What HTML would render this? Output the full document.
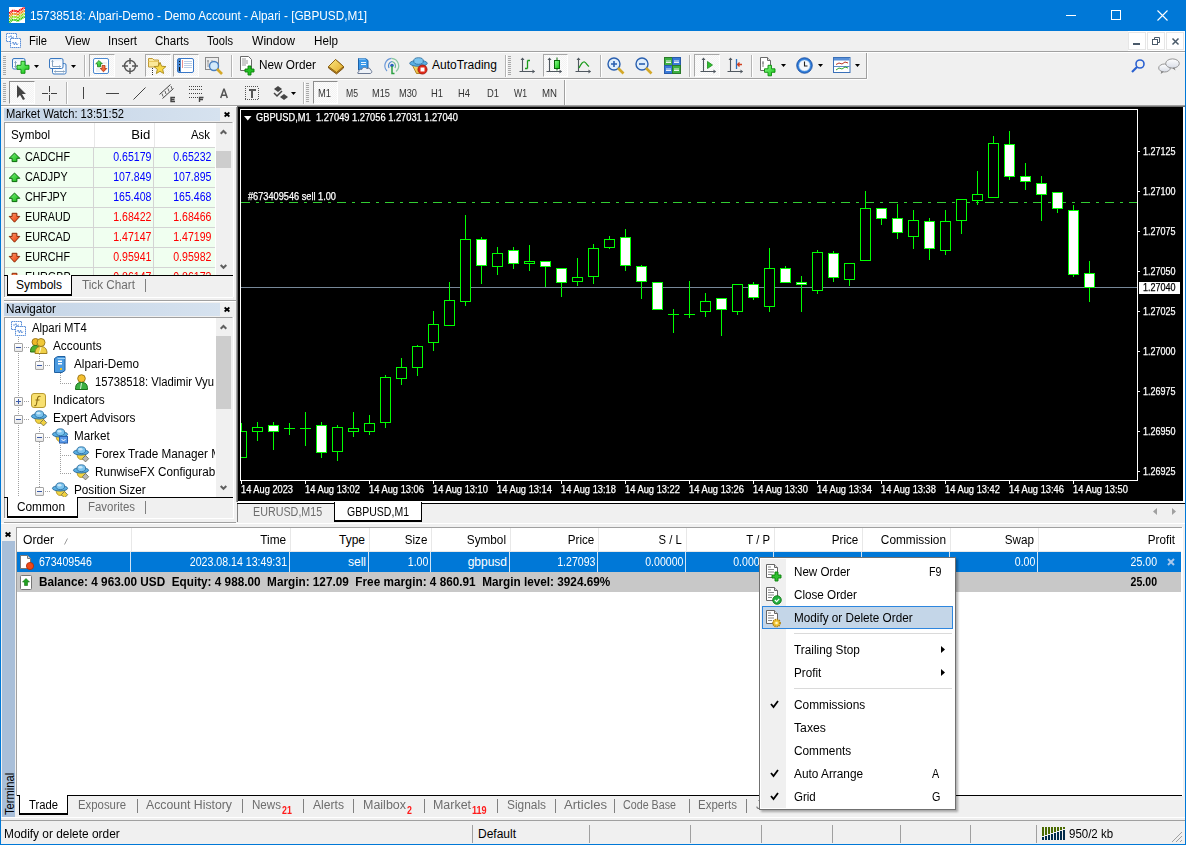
<!DOCTYPE html><html><head><meta charset="utf-8"><style>
*{margin:0;padding:0;box-sizing:border-box}
html,body{width:1186px;height:845px;overflow:hidden;background:#f0f0f0}
body{position:relative;font-family:"Liberation Sans",sans-serif;font-size:12px;color:#000}
div{position:absolute}
.t{white-space:nowrap;line-height:14px}
.c{color:#fff;-webkit-text-stroke:0.25px #fff}
svg{position:absolute;overflow:visible}
</style></head><body><svg width="0" height="0" style="left:0;top:0"><defs><linearGradient id="gwin" x1="0" y1="0" x2="0" y2="1"><stop offset="0" stop-color="#d8e8f8"/><stop offset="0.3" stop-color="#f8fbff"/><stop offset="1" stop-color="#fff"/></linearGradient><linearGradient id="gbook" x1="0" y1="0" x2="1" y2="1"><stop offset="0" stop-color="#fce880"/><stop offset="1" stop-color="#e0a828"/></linearGradient><linearGradient id="gbub" x1="0" y1="0" x2="0" y2="1"><stop offset="0" stop-color="#ffffff"/><stop offset="1" stop-color="#d8dce6"/></linearGradient><linearGradient id="gplus" x1="0" y1="0" x2="1" y2="1"><stop offset="0" stop-color="#90ff90"/><stop offset="1" stop-color="#10c010"/></linearGradient><linearGradient id="gup" x1="0" y1="0" x2="1" y2="1"><stop offset="0" stop-color="#7af07a"/><stop offset="1" stop-color="#14b814"/></linearGradient><linearGradient id="gdn" x1="0" y1="0" x2="1" y2="1"><stop offset="0" stop-color="#ff9a6a"/><stop offset="1" stop-color="#e83a08"/></linearGradient></defs></svg>
<div style="left:0px;top:0px;width:1186px;height:31px;background:#0078d7"></div>
<svg style="left:9px;top:7px;" width="16" height="16" viewBox="0 0 16 16"><rect x="0" y="0" width="16" height="16" fill="#fff"/><polyline points="0.3,6.3 3.5,3.8 7.3,4 8.8,5.2 11,3.2 15.7,0.6" stroke="#f00000" stroke-width="2.1" fill="none" stroke-dasharray="1.2 0.5"/><polyline points="0.3,9.3 3.5,6.8 7.3,7 8.8,8.2 11,6.2 15.7,3.6" stroke="#f07800" stroke-width="2.1" fill="none" stroke-dasharray="1.2 0.5"/><polyline points="0.3,12.3 3.5,9.8 7.3,10 8.8,11.2 11,9.2 15.7,6.6" stroke="#88d800" stroke-width="2.1" fill="none" stroke-dasharray="1.2 0.5"/><polyline points="0.3,15.3 3.5,12.8 7.3,13 8.8,14.2 11,12.2 15.7,9.6" stroke="#30c800" stroke-width="2.1" fill="none" stroke-dasharray="1.2 0.5"/></svg>
<div class="t" style="top:9px;left:30px;transform-origin:0 0;transform:scaleX(0.9813);color:#fff">15738518: Alpari-Demo - Demo Account - Alpari - [GBPUSD,M1]</div>
<div style="left:1066px;top:15px;width:10px;height:1px;background:#fff"></div>
<div style="left:1111px;top:10px;width:10px;height:10px;border:1px solid #fff"></div>
<svg style="left:1157px;top:10px;" width="11" height="11" viewBox="0 0 11 11"><path d="M0.5 0.5L10.5 10.5M10.5 0.5L0.5 10.5" stroke="#fff" stroke-width="1.1"/></svg>
<div style="left:0px;top:31px;width:1px;height:814px;background:#0078d7"></div>
<div style="left:1185px;top:31px;width:1px;height:814px;background:#0078d7"></div>
<div style="left:0px;top:844px;width:1186px;height:1px;background:#0078d7"></div>
<svg style="left:6px;top:33px;" width="15" height="15" viewBox="0 0 15 15"><rect x="0.5" y="0.5" width="10" height="8" fill="#fff" stroke="#5b8fd8" stroke-dasharray="1.5 0.5"/><rect x="4.5" y="5.5" width="10" height="9" fill="#fff" stroke="#5b8fd8" stroke-dasharray="1.5 0.5"/><path d="M2 4h2l1-1.5 1 3 1-1.5h1" stroke="#5b8fd8" fill="none" stroke-width="0.8"/><path d="M6 10.5l1.2-1.5 1.2 3 1.2-3 1.2 3 1.2-1.5" stroke="#5b8fd8" fill="none" stroke-width="0.9"/></svg>
<div class="t" style="top:34px;left:29px;transform-origin:0 0;transform:scaleX(0.9305);">File</div>
<div class="t" style="top:34px;left:65px;transform-origin:0 0;transform:scaleX(0.9691);">View</div>
<div class="t" style="top:34px;left:108px;transform-origin:0 0;transform:scaleX(0.9667);">Insert</div>
<div class="t" style="top:34px;left:155px;transform-origin:0 0;transform:scaleX(0.9620);">Charts</div>
<div class="t" style="top:34px;left:207px;transform-origin:0 0;transform:scaleX(0.9281);">Tools</div>
<div class="t" style="top:34px;left:252px;transform-origin:0 0;transform:scaleX(1.0073);">Window</div>
<div class="t" style="top:34px;left:314px;transform-origin:0 0;transform:scaleX(0.9722);">Help</div>
<div style="left:1128px;top:31px;width:57px;height:20px;background:#fff"></div>
<div style="left:1128px;top:32px;width:18px;height:18px;border:1px solid #e6e6e6;background:#fff"></div>
<div style="left:1147px;top:32px;width:18px;height:18px;border:1px solid #e6e6e6;background:#fff"></div>
<div style="left:1166px;top:32px;width:18px;height:18px;border:1px solid #e6e6e6;background:#fff"></div>
<div style="left:1133px;top:43px;width:7px;height:2px;background:#4a5a6a"></div>
<svg style="left:1152px;top:37px;" width="8" height="8" viewBox="0 0 8 8"><rect x="0.5" y="2.5" width="5" height="5" fill="none" stroke="#4a5a6a"/><path d="M2.5 2.5V0.5H7.5V5.5H5.5" fill="none" stroke="#4a5a6a"/></svg>
<svg style="left:1172px;top:38px;" width="7" height="7" viewBox="0 0 7 7"><path d="M0.5 0.5L6.5 6.5M6.5 0.5L0.5 6.5" stroke="#4a5a6a" stroke-width="1.5"/></svg>
<div style="left:1px;top:51px;width:1184px;height:1px;background:#a0a0a0"></div>
<div style="left:1px;top:52px;width:1184px;height:1px;background:#fff"></div>
<div style="left:866px;top:53px;width:1px;height:26px;background:#a0a0a0"></div>
<div style="left:867px;top:53px;width:1px;height:26px;background:#fff"></div>
<div style="left:1px;top:78px;width:866px;height:1px;background:#a0a0a0"></div>
<div style="left:1px;top:79px;width:866px;height:1px;background:#fff"></div>
<div style="left:3px;top:56px;width:3px;height:1px;background:#a8a8a8"></div>
<div style="left:3px;top:58px;width:3px;height:1px;background:#a8a8a8"></div>
<div style="left:3px;top:60px;width:3px;height:1px;background:#a8a8a8"></div>
<div style="left:3px;top:62px;width:3px;height:1px;background:#a8a8a8"></div>
<div style="left:3px;top:64px;width:3px;height:1px;background:#a8a8a8"></div>
<div style="left:3px;top:66px;width:3px;height:1px;background:#a8a8a8"></div>
<div style="left:3px;top:68px;width:3px;height:1px;background:#a8a8a8"></div>
<div style="left:3px;top:70px;width:3px;height:1px;background:#a8a8a8"></div>
<div style="left:3px;top:72px;width:3px;height:1px;background:#a8a8a8"></div>
<div style="left:3px;top:74px;width:3px;height:1px;background:#a8a8a8"></div>
<svg style="left:12px;top:57px;" width="18" height="17" viewBox="0 0 18 17"><rect x="0.5" y="1.5" width="12.5" height="10.5" rx="1.5" fill="url(#gwin)" stroke="#3a78c0"/><path d="M3.5 4.5v6M2.3 5.7l1.2-1.2 1.2 1.2M2.3 9.3l1.2 1.2 1.2-1.2" stroke="#7a9aba" stroke-width="0.9" fill="none"/><path d="M9 4.3h4v4h4v4h-4v4h-4v-4h-4v-4h4z" fill="url(#gplus)" stroke="#0a8a0a" stroke-width="0.9"/></svg>
<svg style="left:34px;top:65px;" width="5" height="3" viewBox="0 0 5 3"><path d="M0 0H5L2.5 3Z" fill="#000"/></svg>
<svg style="left:49px;top:57px;" width="18" height="18" viewBox="0 0 18 18"><rect x="3.5" y="6.5" width="13.5" height="10.5" rx="1.5" fill="url(#gwin)" stroke="#3a78c0"/><rect x="0.5" y="1.5" width="13.5" height="10" rx="1.5" fill="url(#gwin)" stroke="#3a78c0"/><path d="M3.5 3.5v6h8M2.5 4.5l1-1 1 1M10.5 8.5l1 1-1 1M5.5 14.5h10M6.5 13.5l-1 1 1 1M14.5 13.5l1 1-1 1" stroke="#7a9aba" stroke-width="0.9" fill="none"/></svg>
<svg style="left:71px;top:65px;" width="5" height="3" viewBox="0 0 5 3"><path d="M0 0H5L2.5 3Z" fill="#000"/></svg>
<div style="left:84px;top:55px;width:1px;height:22px;background:#b4b4b4"></div>
<div style="left:85px;top:55px;width:1px;height:22px;background:#fff"></div>
<div style="left:89px;top:54px;width:26px;height:23px;background:repeating-conic-gradient(#f3f3f3 0 25%,#fcfcfc 0 50%) 0 0/2px 2px;border-top:1px solid #a8a8a8;border-left:1px solid #a8a8a8;border-right:1px solid #fff;border-bottom:1px solid #fff"></div>
<svg style="left:93px;top:58px;" width="16" height="16" viewBox="0 0 16 16"><rect x="0.5" y="0.5" width="15" height="15" rx="1.5" fill="#fff" stroke="#4a88d0"/><path d="M9 5h5M9 8h5M3 11h4M3 13h4" stroke="#dde4ea"/><path d="M6 2.5l3.3 3.3H7.5v3H4.5v-3H2.7z" fill="url(#gup)" stroke="#0a700a" stroke-width="0.7"/><path d="M10.5 13.8l-3.3-3.3H9v-3h3v3h1.8z" fill="url(#gdn)" stroke="#a02a08" stroke-width="0.7"/></svg>
<svg style="left:122px;top:58px;" width="16" height="16" viewBox="0 0 16 16"><circle cx="8" cy="8" r="5.5" fill="none" stroke="#555" stroke-width="1.4"/><path d="M8 0v6M8 10v6M0 8h6M10 8h6" stroke="#555" stroke-width="1.4"/></svg>
<div style="left:145px;top:54px;width:26px;height:23px;background:repeating-conic-gradient(#f3f3f3 0 25%,#fcfcfc 0 50%) 0 0/2px 2px;border-top:1px solid #a8a8a8;border-left:1px solid #a8a8a8;border-right:1px solid #fff;border-bottom:1px solid #fff"></div>
<svg style="left:147px;top:57px;" width="20" height="18" viewBox="0 0 20 18"><path d="M1.5 1.5h4l1.5 1.5h4.5v7h-10z" fill="#fbe89a" stroke="#c09a38"/><path d="M1.5 4.5h10" stroke="#e8c860"/><polygon points="13.0,5.3 14.6,9.2 18.9,9.6 15.7,12.4 16.6,16.5 13.0,14.3 9.4,16.5 10.3,12.4 7.1,9.6 11.4,9.2" fill="#f8d848" stroke="#a88818" stroke-width="0.9" stroke-linejoin="round"/><path d="M5.5 11v7" stroke="#333" stroke-dasharray="1 1"/></svg>
<div style="left:173px;top:54px;width:26px;height:23px;background:repeating-conic-gradient(#f3f3f3 0 25%,#fcfcfc 0 50%) 0 0/2px 2px;border-top:1px solid #a8a8a8;border-left:1px solid #a8a8a8;border-right:1px solid #fff;border-bottom:1px solid #fff"></div>
<svg style="left:177px;top:58px;" width="17" height="15" viewBox="0 0 17 15"><rect x="0.5" y="0.5" width="16" height="14" rx="1.5" fill="#fff" stroke="#3a78c8"/><rect x="1" y="1" width="3" height="13" fill="#4a88d0"/><path d="M2.5 3v1M2.5 6v1M2.5 9v4" stroke="#111"/><path d="M7 3.5h8M7 5.5h8M7 7.5h8M7 9.5h8" stroke="#a8c0e0" stroke-width="0.8"/><path d="M5 3h1M5 5h1M5 7h1M5 9h1" stroke="#d02020" stroke-width="1.2"/></svg>
<svg style="left:205px;top:57px;" width="18" height="18" viewBox="0 0 18 18"><rect x="0.5" y="0.5" width="13" height="12" fill="#ececec" stroke="#8a8a8a"/><path d="M3 3v7M2 4h2M7 3v5" stroke="#888" stroke-width="0.8"/><circle cx="9" cy="9" r="4.5" fill="#d4eafa" stroke="#4a80c0" stroke-width="1.4"/><path d="M12 12l5 5" stroke="#d4a828" stroke-width="2.6"/></svg>
<div style="left:231px;top:55px;width:1px;height:22px;background:#b4b4b4"></div>
<div style="left:232px;top:55px;width:1px;height:22px;background:#fff"></div>
<svg style="left:239px;top:56px;" width="17" height="19" viewBox="0 0 17 19"><path d="M1.5 0.5h8l3 3v11h-11z" fill="#fff" stroke="#6a6a6a"/><path d="M3 3h4M3 5h6M3 7h6M3 9h4" stroke="#999"/><path d="M9 10h3v3h3v3h-3v3h-3v-3h-3v-3h3z" fill="#22c022" stroke="#0a800a" stroke-width="0.9"/></svg>
<div class="t" style="top:58px;left:259px;transform-origin:0 0;transform:scaleX(0.9825);">New Order</div>
<svg style="left:327px;top:58px;" width="18" height="17" viewBox="0 0 18 17"><path d="M1.5 8.5L8.5 1.5L16.5 8.5L16.5 10L9.5 16L1.5 10Z" fill="#b88020" stroke="#7a5010" stroke-width="0.9" stroke-linejoin="round"/><path d="M1.5 8.5L8.5 1.5L16.5 8.5L9.5 14.5Z" fill="url(#gbook)" stroke="#8a6010" stroke-width="0.9" stroke-linejoin="round"/></svg>
<svg style="left:355px;top:57px;" width="18" height="18" viewBox="0 0 18 18"><path d="M3.5 1.5h7l2.5 2v9.5h-9.5z" fill="#3a98e8" stroke="#1a60a8"/><path d="M4 2h6.5" stroke="#a8d8ff"/><path d="M6 5.5h5M6 7.5h5" stroke="#e8f4ff" stroke-width="1.2"/><path d="M3 16.5h12c2 0 2.5-3 0.5-3.5c0-2-2.5-2.5-3.5-1.2c-1-2-4.5-2-5 0.5c-2-0.5-3.5 0.8-3 2.2c-1.5 0.5-1.5 2 -1 2z" fill="#eef2f8" stroke="#5a6a88" stroke-width="0.9"/></svg>
<svg style="left:383px;top:57px;" width="18" height="18" viewBox="0 0 18 18"><path d="M4 14A7.5 7.5 0 0 1 8.5 1.3" stroke="#6a98d8" stroke-width="1.2" fill="none"/><path d="M8.5 1.3A7.5 7.5 0 0 1 13 14.5" stroke="#8ac8a0" stroke-width="1.2" fill="none"/><path d="M6 11A4.5 4.5 0 0 1 9 4.5" stroke="#4a88d0" stroke-width="1.2" fill="none"/><path d="M9 4.5A4.5 4.5 0 0 1 12 11" stroke="#6ab890" stroke-width="1.2" fill="none"/><circle cx="9" cy="8.5" r="1.8" fill="#2a60c0"/><path d="M9 9v7.5h2.5" stroke="#2aa040" stroke-width="1.5" fill="none"/></svg>
<svg style="left:409px;top:57px;" width="19" height="18" viewBox="0 0 19 18"><path d="M3 7.5L7.5 16.5h5l4-9z" fill="url(#gbook)" stroke="#a07010" stroke-width="0.8"/><ellipse cx="9.5" cy="6.3" rx="8.8" ry="3" fill="#5aaee2" stroke="#2a6a9a" stroke-width="0.8"/><ellipse cx="9.5" cy="4" rx="4.8" ry="3.3" fill="#7cc4ee" stroke="#2a6a9a" stroke-width="0.8"/><circle cx="13.5" cy="12.5" r="4.6" fill="#e02818" stroke="#901008" stroke-width="0.7"/><rect x="11.5" y="10.5" width="4" height="4" fill="#fff"/></svg>
<div class="t" style="top:58px;left:432px;transform-origin:0 0;">AutoTrading</div>
<div style="left:505px;top:55px;width:1px;height:22px;background:#b4b4b4"></div>
<div style="left:506px;top:55px;width:1px;height:22px;background:#fff"></div>
<div style="left:508px;top:56px;width:3px;height:1px;background:#a8a8a8"></div>
<div style="left:508px;top:58px;width:3px;height:1px;background:#a8a8a8"></div>
<div style="left:508px;top:60px;width:3px;height:1px;background:#a8a8a8"></div>
<div style="left:508px;top:62px;width:3px;height:1px;background:#a8a8a8"></div>
<div style="left:508px;top:64px;width:3px;height:1px;background:#a8a8a8"></div>
<div style="left:508px;top:66px;width:3px;height:1px;background:#a8a8a8"></div>
<div style="left:508px;top:68px;width:3px;height:1px;background:#a8a8a8"></div>
<div style="left:508px;top:70px;width:3px;height:1px;background:#a8a8a8"></div>
<div style="left:508px;top:72px;width:3px;height:1px;background:#a8a8a8"></div>
<div style="left:508px;top:74px;width:3px;height:1px;background:#a8a8a8"></div>
<svg style="left:519px;top:57px;" width="17" height="17" viewBox="0 0 17 17"><path d="M3.5 1v14M0.5 14.5h15" stroke="#505860" stroke-width="1.1"/><path d="M3.5 0.5l-2 2.5h4zM16 14.5l-2.5-2v4z" fill="#505860"/><path d="M8.5 3.5v8M8.5 3.5h2.5M6 11.5h2.5" stroke="#1a9a1a" stroke-width="1.3" fill="none"/></svg>
<div style="left:543px;top:54px;width:25px;height:23px;background:repeating-conic-gradient(#f3f3f3 0 25%,#fcfcfc 0 50%) 0 0/2px 2px;border-top:1px solid #a8a8a8;border-left:1px solid #a8a8a8;border-right:1px solid #fff;border-bottom:1px solid #fff"></div>
<svg style="left:546px;top:57px;" width="17" height="17" viewBox="0 0 17 17"><path d="M3.5 1v14M0.5 14.5h15" stroke="#505860" stroke-width="1.1"/><path d="M3.5 0.5l-2 2.5h4zM16 14.5l-2.5-2v4z" fill="#505860"/><rect x="8.5" y="3.5" width="5" height="8" fill="url(#gplus)" stroke="#0a6a0a"/><path d="M11 0.5v3M11 11.5v2" stroke="#0a6a0a"/></svg>
<svg style="left:575px;top:57px;" width="17" height="17" viewBox="0 0 17 17"><path d="M3.5 1v14M0.5 14.5h15" stroke="#505860" stroke-width="1.1"/><path d="M3.5 0.5l-2 2.5h4zM16 14.5l-2.5-2v4z" fill="#505860"/><path d="M4 11C6 7 8 4.5 9.5 5S12 8 14 9.5" stroke="#1a9a1a" stroke-width="1.3" fill="none"/></svg>
<div style="left:600px;top:55px;width:1px;height:22px;background:#b4b4b4"></div>
<div style="left:601px;top:55px;width:1px;height:22px;background:#fff"></div>
<svg style="left:607px;top:57px;" width="18" height="18" viewBox="0 0 18 18"><circle cx="7" cy="7" r="6" fill="#e0eefc" stroke="#2a60b0" stroke-width="1.4"/><path d="M4 7h6M7 4v6" stroke="#2a60b0" stroke-width="1.6"/><path d="M11 11l5.5 5.5" stroke="#d4a828" stroke-width="2.6"/></svg>
<svg style="left:635px;top:57px;" width="18" height="18" viewBox="0 0 18 18"><circle cx="7" cy="7" r="6" fill="#e0eefc" stroke="#2a60b0" stroke-width="1.4"/><path d="M4 7h6" stroke="#2a60b0" stroke-width="1.6"/><path d="M11 11l5.5 5.5" stroke="#d4a828" stroke-width="2.6"/></svg>
<svg style="left:664px;top:57px;" width="17" height="17" viewBox="0 0 17 17"><rect x="0.5" y="0.5" width="8" height="8" fill="#3cb043" stroke="#2a7a2a"/><rect x="8.5" y="0.5" width="8" height="8" fill="#3a7ad8" stroke="#2a5aa8"/><rect x="0.5" y="8.5" width="8" height="8" fill="#3a7ad8" stroke="#2a5aa8"/><rect x="8.5" y="8.5" width="8" height="8" fill="#3cb043" stroke="#2a7a2a"/><path d="M2 4h5M10 4h5M2 12h5M10 12h5M2 5.5h5M10 5.5h5M2 13.5h5M10 13.5h5" stroke="#fff" stroke-width="0.9"/></svg>
<div style="left:689px;top:55px;width:1px;height:22px;background:#b4b4b4"></div>
<div style="left:690px;top:55px;width:1px;height:22px;background:#fff"></div>
<div style="left:694px;top:54px;width:26px;height:23px;background:repeating-conic-gradient(#f3f3f3 0 25%,#fcfcfc 0 50%) 0 0/2px 2px;border-top:1px solid #a8a8a8;border-left:1px solid #a8a8a8;border-right:1px solid #fff;border-bottom:1px solid #fff"></div>
<svg style="left:700px;top:57px;" width="17" height="17" viewBox="0 0 17 17"><path d="M3.5 1v14M0.5 14.5h15" stroke="#505860" stroke-width="1.1"/><path d="M3.5 0.5l-2 2.5h4zM16 14.5l-2.5-2v4z" fill="#505860"/><path d="M7.5 4.5l5 3.5-5 3.5z" fill="#30c030" stroke="#1a8a1a" stroke-width="0.8"/></svg>
<svg style="left:727px;top:57px;" width="17" height="17" viewBox="0 0 17 17"><path d="M3.5 1v14M0.5 14.5h15" stroke="#505860" stroke-width="1.1"/><path d="M3.5 0.5l-2 2.5h4zM16 14.5l-2.5-2v4z" fill="#505860"/><path d="M9.5 2v10" stroke="#2a70c0" stroke-width="1.3"/><path d="M15 7.5h-4M12.5 5.5l-2 2 2 2" stroke="#d04020" stroke-width="1.3" fill="none"/></svg>
<div style="left:751px;top:55px;width:1px;height:22px;background:#b4b4b4"></div>
<div style="left:752px;top:55px;width:1px;height:22px;background:#fff"></div>
<svg style="left:759px;top:57px;" width="18" height="19" viewBox="0 0 18 19"><path d="M1.5 0.5h7l3 3v10h-10z" fill="#fff" stroke="#6a6a6a"/><path d="M8.5 0.5v3h3" fill="#ddd" stroke="#6a6a6a"/><path d="M4 4v6M3 6h2" stroke="#777" stroke-width="0.9"/><path d="M9 8.3h3.5v3.5h3.5v3.5h-3.5v3.5h-3.5v-3.5h-3.5v-3.5h3.5z" fill="url(#gplus)" stroke="#0a8a0a" stroke-width="0.9"/></svg>
<svg style="left:781px;top:64px;" width="5" height="3" viewBox="0 0 5 3"><path d="M0 0H5L2.5 3Z" fill="#000"/></svg>
<svg style="left:796px;top:57px;" width="17" height="17" viewBox="0 0 17 17"><circle cx="8.5" cy="8.5" r="7.8" fill="#2a78d8" stroke="#1a4a98" stroke-width="0.8"/><circle cx="8.5" cy="8.5" r="5.6" fill="#f4f8fc" stroke="#8ab8e8" stroke-width="0.6"/><path d="M8.5 4.5v4.5h3" stroke="#222" stroke-width="1.1" fill="none"/></svg>
<svg style="left:818px;top:64px;" width="5" height="3" viewBox="0 0 5 3"><path d="M0 0H5L2.5 3Z" fill="#000"/></svg>
<svg style="left:833px;top:57px;" width="18" height="16" viewBox="0 0 18 16"><rect x="0.5" y="0.5" width="16.5" height="15" fill="#fff" stroke="#3a70b8"/><rect x="1" y="1" width="15.5" height="2.5" fill="#5a90d8"/><path d="M1 9.5h15.5" stroke="#3a70b8" stroke-width="0.8"/><path d="M3 7.5l3-1.5 3 1 3-2 3 1" stroke="#b02010" stroke-width="0.9" fill="none"/><path d="M3 13l3-2 3 1 3-2 3 1" stroke="#1a9a1a" stroke-width="0.9" fill="none"/></svg>
<svg style="left:855px;top:64px;" width="5" height="3" viewBox="0 0 5 3"><path d="M0 0H5L2.5 3Z" fill="#000"/></svg>
<svg style="left:1131px;top:59px;" width="14" height="14" viewBox="0 0 14 14"><circle cx="9" cy="5" r="4" fill="none" stroke="#2a60d0" stroke-width="1.6"/><path d="M6 8l-5 5" stroke="#2a60d0" stroke-width="2.2"/></svg>
<svg style="left:1158px;top:58px;" width="22" height="17" viewBox="0 0 22 17"><ellipse cx="6.5" cy="10" rx="5.8" ry="4" fill="url(#gbub)" stroke="#8a8a8a" stroke-width="0.9"/><path d="M3.5 13.3l-0.8 2.8 3-2.3" fill="#7a7a7a"/><ellipse cx="14.5" cy="5.5" rx="6.8" ry="4.6" fill="url(#gbub)" stroke="#8a8a8a" stroke-width="0.9"/><path d="M16.5 9.8l1 2.6-3.2-2.4" fill="#7a7a7a"/></svg>
<div style="left:564px;top:80px;width:1px;height:25px;background:#a0a0a0"></div>
<div style="left:565px;top:80px;width:1px;height:25px;background:#fff"></div>
<div style="left:1px;top:105px;width:236px;height:1px;background:#a0a0a0"></div>
<div style="left:1px;top:106px;width:236px;height:1px;background:#fff"></div>
<div style="left:237px;top:105px;width:948px;height:1px;background:#a0a0a0"></div>
<div style="left:237px;top:106px;width:948px;height:1px;background:#707070"></div>
<div style="left:3px;top:83px;width:3px;height:1px;background:#a8a8a8"></div>
<div style="left:3px;top:85px;width:3px;height:1px;background:#a8a8a8"></div>
<div style="left:3px;top:87px;width:3px;height:1px;background:#a8a8a8"></div>
<div style="left:3px;top:89px;width:3px;height:1px;background:#a8a8a8"></div>
<div style="left:3px;top:91px;width:3px;height:1px;background:#a8a8a8"></div>
<div style="left:3px;top:93px;width:3px;height:1px;background:#a8a8a8"></div>
<div style="left:3px;top:95px;width:3px;height:1px;background:#a8a8a8"></div>
<div style="left:3px;top:97px;width:3px;height:1px;background:#a8a8a8"></div>
<div style="left:3px;top:99px;width:3px;height:1px;background:#a8a8a8"></div>
<div style="left:3px;top:101px;width:3px;height:1px;background:#a8a8a8"></div>
<div style="left:9px;top:81px;width:26px;height:23px;background:repeating-conic-gradient(#f3f3f3 0 25%,#fcfcfc 0 50%) 0 0/2px 2px;border-top:1px solid #8c8c8c;border-left:1px solid #8c8c8c;border-right:1px solid #fff;border-bottom:1px solid #fff"></div>
<svg style="left:16px;top:85px;" width="10" height="15" viewBox="0 0 10 15"><path d="M1 0v13l3-3 3 5 2-1-3-5h4z" fill="#444"/></svg>
<div style="left:42px;top:93px;width:6px;height:1px;background:#404040"></div>
<div style="left:51px;top:93px;width:6px;height:1px;background:#404040"></div>
<div style="left:49px;top:93px;width:1px;height:1px;background:#606060"></div>
<div style="left:49px;top:86px;width:1px;height:6px;background:#404040"></div>
<div style="left:49px;top:95px;width:1px;height:6px;background:#404040"></div>
<div style="left:66px;top:82px;width:1px;height:22px;background:#b4b4b4"></div>
<div style="left:67px;top:82px;width:1px;height:22px;background:#fff"></div>
<div style="left:83px;top:87px;width:1px;height:12px;background:#444"></div>
<div style="left:106px;top:93px;width:13px;height:1px;background:#444"></div>
<svg style="left:133px;top:87px;" width="14" height="14" viewBox="0 0 14 14"><path d="M0.5 12.5L12.5 0.5" stroke="#444" stroke-width="1"/></svg>
<svg style="left:159px;top:84px;" width="19" height="19" viewBox="0 0 19 19"><path d="M0.5 10.5L11.5 0.5M3.5 14.5L14.5 4.5" stroke="#444" stroke-width="1"/><path d="M3 9.5l1 3M6 7l1 3M9 4.5l1 3M12 2l1 3" stroke="#555" stroke-width="0.9"/><path d="M16 13.5h-4v4h4M12 15.5h3.5" stroke="#444" stroke-width="1.4" fill="none"/></svg>
<svg style="left:188px;top:84px;" width="18" height="19" viewBox="0 0 18 19"><path d="M1 2.5h13M1 5.5h13M1 9.5h13M1 13.5h9" stroke="#444" stroke-dasharray="1 1"/><path d="M15.5 13.5h-4v4.5M11.5 15.5h3.5" stroke="#444" stroke-width="1.4" fill="none"/></svg>
<svg style="left:220px;top:89px;" width="8" height="9" viewBox="0 0 8 9"><path d="M0.7 9L3.8 0.3h0.4L7.3 9M1.8 6.2h4.4" stroke="#555" stroke-width="1.5" fill="none"/></svg>
<svg style="left:245px;top:86px;shape-rendering:crispEdges" width="14" height="14" viewBox="0 0 14 14"><rect x="0" y="0" width="1" height="1" fill="#555"/><rect x="0" y="13" width="1" height="1" fill="#555"/><rect x="2" y="0" width="1" height="1" fill="#555"/><rect x="2" y="13" width="1" height="1" fill="#555"/><rect x="4" y="0" width="1" height="1" fill="#555"/><rect x="4" y="13" width="1" height="1" fill="#555"/><rect x="6" y="0" width="1" height="1" fill="#555"/><rect x="6" y="13" width="1" height="1" fill="#555"/><rect x="8" y="0" width="1" height="1" fill="#555"/><rect x="8" y="13" width="1" height="1" fill="#555"/><rect x="10" y="0" width="1" height="1" fill="#555"/><rect x="10" y="13" width="1" height="1" fill="#555"/><rect x="12" y="0" width="1" height="1" fill="#555"/><rect x="12" y="13" width="1" height="1" fill="#555"/><rect x="0" y="2" width="1" height="1" fill="#555"/><rect x="13" y="2" width="1" height="1" fill="#555"/><rect x="0" y="4" width="1" height="1" fill="#555"/><rect x="13" y="4" width="1" height="1" fill="#555"/><rect x="0" y="6" width="1" height="1" fill="#555"/><rect x="13" y="6" width="1" height="1" fill="#555"/><rect x="0" y="8" width="1" height="1" fill="#555"/><rect x="13" y="8" width="1" height="1" fill="#555"/><rect x="0" y="10" width="1" height="1" fill="#555"/><rect x="13" y="10" width="1" height="1" fill="#555"/><rect x="0" y="12" width="1" height="1" fill="#555"/><rect x="13" y="12" width="1" height="1" fill="#555"/><path d="M3.5 3.5h7M7 3.5v8" stroke="#555" stroke-width="2"/></svg>
<svg style="left:273px;top:86px;" width="16" height="14" viewBox="0 0 16 14"><path d="M5 0l4 3-4 3-4-3z" fill="#444"/><path d="M11 8l4 3-4 3-4-3z" fill="#444"/><path d="M1 7l3 3 5-5" stroke="#444" stroke-width="1.5" fill="none"/></svg>
<svg style="left:291px;top:92px;" width="5" height="3" viewBox="0 0 5 3"><path d="M0 0H5L2.5 3Z" fill="#000"/></svg>
<div style="left:303px;top:82px;width:1px;height:22px;background:#b4b4b4"></div>
<div style="left:304px;top:82px;width:1px;height:22px;background:#fff"></div>
<div style="left:306px;top:83px;width:3px;height:1px;background:#a8a8a8"></div>
<div style="left:306px;top:85px;width:3px;height:1px;background:#a8a8a8"></div>
<div style="left:306px;top:87px;width:3px;height:1px;background:#a8a8a8"></div>
<div style="left:306px;top:89px;width:3px;height:1px;background:#a8a8a8"></div>
<div style="left:306px;top:91px;width:3px;height:1px;background:#a8a8a8"></div>
<div style="left:306px;top:93px;width:3px;height:1px;background:#a8a8a8"></div>
<div style="left:306px;top:95px;width:3px;height:1px;background:#a8a8a8"></div>
<div style="left:306px;top:97px;width:3px;height:1px;background:#a8a8a8"></div>
<div style="left:306px;top:99px;width:3px;height:1px;background:#a8a8a8"></div>
<div style="left:306px;top:101px;width:3px;height:1px;background:#a8a8a8"></div>
<div style="left:313px;top:81px;width:25px;height:23px;background:repeating-conic-gradient(#f3f3f3 0 25%,#fcfcfc 0 50%) 0 0/2px 2px;border-top:1px solid #8c8c8c;border-left:1px solid #8c8c8c;border-right:1px solid #fff;border-bottom:1px solid #fff"></div>
<div class="t" style="top:86px;left:318px;transform-origin:0 0;transform:scaleX(0.8507);font-size:11px;color:#333">M1</div>
<div class="t" style="top:86px;left:346px;transform-origin:0 0;transform:scaleX(0.7853);font-size:11px;color:#333">M5</div>
<div class="t" style="top:86px;left:372px;transform-origin:0 0;transform:scaleX(0.8409);font-size:11px;color:#333">M15</div>
<div class="t" style="top:86px;left:399px;transform-origin:0 0;transform:scaleX(0.8409);font-size:11px;color:#333">M30</div>
<div class="t" style="top:86px;left:431px;transform-origin:0 0;transform:scaleX(0.8533);font-size:11px;color:#333">H1</div>
<div class="t" style="top:86px;left:458px;transform-origin:0 0;transform:scaleX(0.8533);font-size:11px;color:#333">H4</div>
<div class="t" style="top:86px;left:487px;transform-origin:0 0;transform:scaleX(0.8533);font-size:11px;color:#333">D1</div>
<div class="t" style="top:86px;left:514px;transform-origin:0 0;transform:scaleX(0.7879);font-size:11px;color:#333">W1</div>
<div class="t" style="top:86px;left:542px;transform-origin:0 0;transform:scaleX(0.8775);font-size:11px;color:#333">MN</div>
<div style="left:4px;top:108px;width:216px;height:13px;background:linear-gradient(90deg,#c4d4e6,#d6e2ef)"></div>
<div class="t" style="top:107px;left:6px;transform-origin:0 0;transform:scaleX(0.9298);">Market Watch: 13:51:52</div>
<svg style="left:224px;top:112px;" width="6" height="5" viewBox="0 0 6 5"><path d="M0.6 0.5L5.4 4.5M5.4 0.5L0.6 4.5" stroke="#000" stroke-width="1.7"/></svg>
<div style="left:4px;top:122px;width:229px;height:154px;background:#fff;border:1px solid #a0a0a0;border-right-color:#fff;border-bottom:none"></div>
<div style="left:94px;top:123px;width:1px;height:24px;background:#e8e8e8"></div>
<div style="left:154px;top:123px;width:1px;height:24px;background:#e8e8e8"></div>
<div class="t" style="top:128px;left:11px;transform-origin:0 0;transform:scaleX(0.9746);">Symbol</div>
<div class="t" style="top:128px;right:1036px;transform-origin:100% 0;transform:scaleX(1.0955);">Bid</div>
<div class="t" style="top:128px;right:976px;transform-origin:100% 0;transform:scaleX(0.9500);">Ask</div>
<div style="left:0;top:0;width:1186px;height:275px;overflow:hidden">
<div style="left:5px;top:147px;width:210px;height:1px;background:#d4d4d4"></div>
<div style="left:5px;top:148px;width:210px;height:19px;background:#f0fff0"></div>
<div style="left:93px;top:148px;width:1px;height:19px;background:#d4d4d4"></div>
<div style="left:153px;top:148px;width:1px;height:19px;background:#d4d4d4"></div>
<svg style="left:9px;top:152px;" width="12" height="11" viewBox="0 0 12 11"><path d="M5.5 1L10.8 6.3H7.9V9.6H3.1V6.3H0.2Z" fill="url(#gup)" stroke="#0a6a0a" stroke-width="1" stroke-linejoin="round"/></svg>
<div class="t" style="top:150px;left:25px;transform-origin:0 0;transform:scaleX(0.9000);">CADCHF</div>
<div class="t" style="top:150px;right:1035px;transform-origin:100% 0;transform:scaleX(0.8800);color:#0000ff">0.65179</div>
<div class="t" style="top:150px;right:975px;transform-origin:100% 0;transform:scaleX(0.8800);color:#0000ff">0.65232</div>
<div style="left:5px;top:167px;width:210px;height:1px;background:#d4d4d4"></div>
<div style="left:5px;top:168px;width:210px;height:19px;background:#f0fff0"></div>
<div style="left:93px;top:168px;width:1px;height:19px;background:#d4d4d4"></div>
<div style="left:153px;top:168px;width:1px;height:19px;background:#d4d4d4"></div>
<svg style="left:9px;top:172px;" width="12" height="11" viewBox="0 0 12 11"><path d="M5.5 1L10.8 6.3H7.9V9.6H3.1V6.3H0.2Z" fill="url(#gup)" stroke="#0a6a0a" stroke-width="1" stroke-linejoin="round"/></svg>
<div class="t" style="top:170px;left:25px;transform-origin:0 0;transform:scaleX(0.9000);">CADJPY</div>
<div class="t" style="top:170px;right:1035px;transform-origin:100% 0;transform:scaleX(0.8800);color:#0000ff">107.849</div>
<div class="t" style="top:170px;right:975px;transform-origin:100% 0;transform:scaleX(0.8800);color:#0000ff">107.895</div>
<div style="left:5px;top:187px;width:210px;height:1px;background:#d4d4d4"></div>
<div style="left:5px;top:188px;width:210px;height:19px;background:#f0fff0"></div>
<div style="left:93px;top:188px;width:1px;height:19px;background:#d4d4d4"></div>
<div style="left:153px;top:188px;width:1px;height:19px;background:#d4d4d4"></div>
<svg style="left:9px;top:192px;" width="12" height="11" viewBox="0 0 12 11"><path d="M5.5 1L10.8 6.3H7.9V9.6H3.1V6.3H0.2Z" fill="url(#gup)" stroke="#0a6a0a" stroke-width="1" stroke-linejoin="round"/></svg>
<div class="t" style="top:190px;left:25px;transform-origin:0 0;transform:scaleX(0.9000);">CHFJPY</div>
<div class="t" style="top:190px;right:1035px;transform-origin:100% 0;transform:scaleX(0.8800);color:#0000ff">165.408</div>
<div class="t" style="top:190px;right:975px;transform-origin:100% 0;transform:scaleX(0.8800);color:#0000ff">165.468</div>
<div style="left:5px;top:207px;width:210px;height:1px;background:#d4d4d4"></div>
<div style="left:5px;top:208px;width:210px;height:19px;background:#f0fff0"></div>
<div style="left:93px;top:208px;width:1px;height:19px;background:#d4d4d4"></div>
<div style="left:153px;top:208px;width:1px;height:19px;background:#d4d4d4"></div>
<svg style="left:9px;top:213px;" width="12" height="11" viewBox="0 0 12 11"><path d="M3.1 0.3H7.9V3.4H10.8L5.5 9.2L0.2 3.4H3.1Z" fill="url(#gdn)" stroke="#8a2a08" stroke-width="1" stroke-linejoin="round"/></svg>
<div class="t" style="top:210px;left:25px;transform-origin:0 0;transform:scaleX(0.9000);">EURAUD</div>
<div class="t" style="top:210px;right:1035px;transform-origin:100% 0;transform:scaleX(0.8800);color:#ff0000">1.68422</div>
<div class="t" style="top:210px;right:975px;transform-origin:100% 0;transform:scaleX(0.8800);color:#ff0000">1.68466</div>
<div style="left:5px;top:227px;width:210px;height:1px;background:#d4d4d4"></div>
<div style="left:5px;top:228px;width:210px;height:19px;background:#f0fff0"></div>
<div style="left:93px;top:228px;width:1px;height:19px;background:#d4d4d4"></div>
<div style="left:153px;top:228px;width:1px;height:19px;background:#d4d4d4"></div>
<svg style="left:9px;top:233px;" width="12" height="11" viewBox="0 0 12 11"><path d="M3.1 0.3H7.9V3.4H10.8L5.5 9.2L0.2 3.4H3.1Z" fill="url(#gdn)" stroke="#8a2a08" stroke-width="1" stroke-linejoin="round"/></svg>
<div class="t" style="top:230px;left:25px;transform-origin:0 0;transform:scaleX(0.9000);">EURCAD</div>
<div class="t" style="top:230px;right:1035px;transform-origin:100% 0;transform:scaleX(0.8800);color:#ff0000">1.47147</div>
<div class="t" style="top:230px;right:975px;transform-origin:100% 0;transform:scaleX(0.8800);color:#ff0000">1.47199</div>
<div style="left:5px;top:247px;width:210px;height:1px;background:#d4d4d4"></div>
<div style="left:5px;top:248px;width:210px;height:19px;background:#f0fff0"></div>
<div style="left:93px;top:248px;width:1px;height:19px;background:#d4d4d4"></div>
<div style="left:153px;top:248px;width:1px;height:19px;background:#d4d4d4"></div>
<svg style="left:9px;top:253px;" width="12" height="11" viewBox="0 0 12 11"><path d="M3.1 0.3H7.9V3.4H10.8L5.5 9.2L0.2 3.4H3.1Z" fill="url(#gdn)" stroke="#8a2a08" stroke-width="1" stroke-linejoin="round"/></svg>
<div class="t" style="top:250px;left:25px;transform-origin:0 0;transform:scaleX(0.9000);">EURCHF</div>
<div class="t" style="top:250px;right:1035px;transform-origin:100% 0;transform:scaleX(0.8800);color:#ff0000">0.95941</div>
<div class="t" style="top:250px;right:975px;transform-origin:100% 0;transform:scaleX(0.8800);color:#ff0000">0.95982</div>
<div style="left:5px;top:267px;width:210px;height:1px;background:#d4d4d4"></div>
<div style="left:5px;top:268px;width:210px;height:19px;background:#f0fff0"></div>
<div style="left:93px;top:268px;width:1px;height:19px;background:#d4d4d4"></div>
<div style="left:153px;top:268px;width:1px;height:19px;background:#d4d4d4"></div>
<svg style="left:9px;top:273px;" width="12" height="11" viewBox="0 0 12 11"><path d="M3.1 0.3H7.9V3.4H10.8L5.5 9.2L0.2 3.4H3.1Z" fill="url(#gdn)" stroke="#8a2a08" stroke-width="1" stroke-linejoin="round"/></svg>
<div class="t" style="top:270px;left:25px;transform-origin:0 0;transform:scaleX(0.9000);">EURGBP</div>
<div class="t" style="top:270px;right:1035px;transform-origin:100% 0;transform:scaleX(0.8800);color:#ff0000">0.86147</div>
<div class="t" style="top:270px;right:975px;transform-origin:100% 0;transform:scaleX(0.8800);color:#ff0000">0.86173</div>
</div>
<div style="left:216px;top:123px;width:17px;height:152px;background:#f0f0f0"></div>
<svg style="left:220px;top:129px;" width="7" height="5" viewBox="0 0 7 5"><path d="M0.7 4.8L3.5 2L6.3 4.8" stroke="#606060" stroke-width="2" fill="none"/></svg>
<div style="left:216px;top:151px;width:15px;height:17px;background:#cdcdcd"></div>
<svg style="left:220px;top:264px;" width="7" height="5" viewBox="0 0 7 5"><path d="M0.7 1L3.5 3.8L6.3 1" stroke="#606060" stroke-width="2" fill="none"/></svg>
<div style="left:4px;top:275px;width:229px;height:1px;background:#000"></div>
<div style="left:233px;top:122px;width:1px;height:175px;background:#fff"></div>
<div style="left:4px;top:276px;width:1px;height:21px;background:#a0a0a0"></div>
<div style="left:7px;top:275px;width:65px;height:21px;background:#fff;border:1px solid #000;border-top:none;border-bottom-width:2px"></div>
<div class="t" style="top:278px;left:16px;transform-origin:0 0;">Symbols</div>
<div class="t" style="top:278px;left:82px;transform-origin:0 0;transform:scaleX(0.9772);color:#6d6d6d">Tick Chart</div>
<div style="left:145px;top:279px;width:1px;height:13px;background:#808080"></div>
<div style="left:4px;top:297px;width:229px;height:1px;background:#fff"></div>
<div style="left:4px;top:300px;width:232px;height:1px;background:#a0a0a0"></div>
<div style="left:4px;top:301px;width:232px;height:1px;background:#fff"></div>
<div style="left:4px;top:303px;width:216px;height:13px;background:linear-gradient(90deg,#c4d4e6,#d6e2ef)"></div>
<div class="t" style="top:302px;left:6px;transform-origin:0 0;transform:scaleX(0.9735);">Navigator</div>
<svg style="left:224px;top:307px;" width="6" height="5" viewBox="0 0 6 5"><path d="M0.6 0.5L5.4 4.5M5.4 0.5L0.6 4.5" stroke="#000" stroke-width="1.7"/></svg>
<div style="left:4px;top:317px;width:229px;height:181px;background:#fff;border:1px solid #a0a0a0;border-right-color:#fff;border-bottom:none"></div>
<div style="left:216px;top:318px;width:17px;height:179px;background:#f0f0f0"></div>
<svg style="left:220px;top:324px;" width="7" height="5" viewBox="0 0 7 5"><path d="M0.7 4.8L3.5 2L6.3 4.8" stroke="#606060" stroke-width="2" fill="none"/></svg>
<div style="left:216px;top:336px;width:15px;height:73px;background:#cdcdcd"></div>
<svg style="left:220px;top:485px;" width="7" height="5" viewBox="0 0 7 5"><path d="M0.7 1L3.5 3.8L6.3 1" stroke="#606060" stroke-width="2" fill="none"/></svg>
<div style="left:5px;top:318px;width:210px;height:179px;overflow:hidden">
<div class="t" style="top:3px;left:27px;transform-origin:0 0;transform:scaleX(0.9425);">Alpari MT4</div>
<div class="t" style="top:21px;left:48px;transform-origin:0 0;transform:scaleX(0.9838);">Accounts</div>
<div class="t" style="top:39px;left:69px;transform-origin:0 0;transform:scaleX(0.9750);">Alpari-Demo</div>
<div class="t" style="top:57px;left:90px;transform-origin:0 0;transform:scaleX(0.9372);">15738518: Vladimir Vyu</div>
<div class="t" style="top:75px;left:48px;transform-origin:0 0;transform:scaleX(0.9936);">Indicators</div>
<div class="t" style="top:93px;left:48px;transform-origin:0 0;transform:scaleX(0.9887);">Expert Advisors</div>
<div class="t" style="top:111px;left:69px;transform-origin:0 0;transform:scaleX(0.9727);">Market</div>
<div class="t" style="top:129px;left:90px;transform-origin:0 0;transform:scaleX(0.9782);">Forex Trade Manager M</div>
<div class="t" style="top:147px;left:90px;transform-origin:0 0;transform:scaleX(0.9735);">RunwiseFX Configurab</div>
<div class="t" style="top:165px;left:69px;transform-origin:0 0;transform:scaleX(0.9782);">Position Sizer</div>
</div>
<svg style="left:11px;top:321px;" width="15" height="15" viewBox="0 0 15 15"><rect x="0.5" y="0.5" width="10" height="8" fill="#fff" stroke="#5b8fd8" stroke-dasharray="1.5 0.5"/><rect x="4.5" y="5.5" width="10" height="9" fill="#fff" stroke="#5b8fd8" stroke-dasharray="1.5 0.5"/><path d="M2 4h2l1-1.5 1 3 1-1.5h1" stroke="#5b8fd8" fill="none" stroke-width="0.8"/><path d="M6 10.5l1.2-1.5 1.2 3 1.2-3 1.2 3 1.2-1.5" stroke="#5b8fd8" fill="none" stroke-width="0.9"/></svg>
<svg style="left:30px;top:337px;" width="18" height="17" viewBox="0 0 18 17"><circle cx="5.5" cy="5" r="3.5" fill="#f0b828" stroke="#a07818"/><path d="M0.5 15c0-5 2-6.5 5-6.5s5 1.5 5 6.5z" fill="#50b030" stroke="#2a7010"/><circle cx="11" cy="5.5" r="4" fill="#f0c838" stroke="#a08020"/><path d="M5 16.5c0-5 2.5-7 6-7s6 2 6 7z" fill="#f0d048" stroke="#a08020"/><path d="M11 10l-1.5 6" stroke="#fff" stroke-width="0.8"/></svg>
<svg style="left:54px;top:356px;" width="12" height="17" viewBox="0 0 12 17"><path d="M0.5 2.5l3-2h7.5v14l-3 2h-7.5z" fill="#4a9ae0" stroke="#2060a0"/><path d="M3.5 2.5h7.5" stroke="#9ad0f8"/><rect x="4" y="4.5" width="4" height="1.5" fill="#fff"/><rect x="4" y="7" width="4" height="1.5" fill="#fff"/><rect x="6" y="12" width="2" height="2" fill="#f0c020"/></svg>
<svg style="left:75px;top:374px;" width="13" height="16" viewBox="0 0 13 16"><circle cx="6.5" cy="4.5" r="3.8" fill="#f4c030" stroke="#a07818"/><path d="M0.5 15.5c0-5.5 2-7 6-7s6 1.5 6 7z" fill="#3cb043" stroke="#1a701a"/><path d="M6.5 9l-1 6" stroke="#fff" stroke-width="0.8"/></svg>
<svg style="left:31px;top:393px;" width="15" height="15" viewBox="0 0 15 15"><rect x="0.5" y="0.5" width="14" height="14" rx="2.5" fill="#f8e070" stroke="#b89a30"/><path d="M9.5 3.5c-1.5-0.5-2.5 0-3 2L5.5 11c-0.3 1.5-1.2 2-2.2 1.5M4.5 7h4" stroke="#8a6a10" stroke-width="1.1" fill="none"/></svg>
<svg style="left:31px;top:410px;" width="17" height="17" viewBox="0 0 17 17"><path d="M4 7.5Q4 13.5 8.5 13.5Q12.5 13.5 13 7.5z" fill="#f2d440" stroke="#a88a20" stroke-width="0.8"/><ellipse cx="8" cy="6.3" rx="7.6" ry="2.7" fill="#58aee2" stroke="#2a6a9a" stroke-width="0.9"/><ellipse cx="8.3" cy="4.2" rx="4.3" ry="3.4" fill="#7cc4ee" stroke="#2a6a9a" stroke-width="0.8"/><ellipse cx="7.5" cy="3.3" rx="2" ry="1.2" fill="#c8e8fa"/><path d="M12.5 9.5l3.2 3.2-3.2 3.2-3.2-3.2z" fill="#f0d040" stroke="#6a6a50" stroke-width="0.8"/></svg>
<svg style="left:52px;top:428px;" width="17" height="17" viewBox="0 0 17 17"><path d="M4 7.5Q4 13.5 8.5 13.5Q12.5 13.5 13 7.5z" fill="#f2d440" stroke="#a88a20" stroke-width="0.8"/><ellipse cx="8" cy="6.3" rx="7.6" ry="2.7" fill="#58aee2" stroke="#2a6a9a" stroke-width="0.9"/><ellipse cx="8.3" cy="4.2" rx="4.3" ry="3.4" fill="#7cc4ee" stroke="#2a6a9a" stroke-width="0.8"/><ellipse cx="7.5" cy="3.3" rx="2" ry="1.2" fill="#c8e8fa"/><path d="M12.5 9.5l3.2 3.2-3.2 3.2-3.2-3.2z" fill="#f0d040" stroke="#6a6a50" stroke-width="0.8"/><rect x="7.5" y="8.5" width="8" height="6.5" fill="#5a9ae8" stroke="#2a60b0"/><path d="M9.5 11l2 2 2-2" stroke="#fff" fill="none"/></svg>
<svg style="left:73px;top:446px;" width="17" height="17" viewBox="0 0 17 17"><path d="M4 7.5Q4 13.5 8.5 13.5Q12.5 13.5 13 7.5z" fill="#f2d440" stroke="#a88a20" stroke-width="0.8"/><ellipse cx="8" cy="6.3" rx="7.6" ry="2.7" fill="#58aee2" stroke="#2a6a9a" stroke-width="0.9"/><ellipse cx="8.3" cy="4.2" rx="4.3" ry="3.4" fill="#7cc4ee" stroke="#2a6a9a" stroke-width="0.8"/><ellipse cx="7.5" cy="3.3" rx="2" ry="1.2" fill="#c8e8fa"/><path d="M12.5 9.5l3.2 3.2-3.2 3.2-3.2-3.2z" fill="#b8b8b8" stroke="#6a6a50" stroke-width="0.8"/></svg>
<svg style="left:73px;top:464px;" width="17" height="17" viewBox="0 0 17 17"><path d="M4 7.5Q4 13.5 8.5 13.5Q12.5 13.5 13 7.5z" fill="#f2d440" stroke="#a88a20" stroke-width="0.8"/><ellipse cx="8" cy="6.3" rx="7.6" ry="2.7" fill="#58aee2" stroke="#2a6a9a" stroke-width="0.9"/><ellipse cx="8.3" cy="4.2" rx="4.3" ry="3.4" fill="#7cc4ee" stroke="#2a6a9a" stroke-width="0.8"/><ellipse cx="7.5" cy="3.3" rx="2" ry="1.2" fill="#c8e8fa"/><path d="M12.5 9.5l3.2 3.2-3.2 3.2-3.2-3.2z" fill="#b8b8b8" stroke="#6a6a50" stroke-width="0.8"/></svg>
<svg style="left:52px;top:482px;" width="17" height="17" viewBox="0 0 17 17"><path d="M4 7.5Q4 13.5 8.5 13.5Q12.5 13.5 13 7.5z" fill="#f2d440" stroke="#a88a20" stroke-width="0.8"/><ellipse cx="8" cy="6.3" rx="7.6" ry="2.7" fill="#58aee2" stroke="#2a6a9a" stroke-width="0.9"/><ellipse cx="8.3" cy="4.2" rx="4.3" ry="3.4" fill="#7cc4ee" stroke="#2a6a9a" stroke-width="0.8"/><ellipse cx="7.5" cy="3.3" rx="2" ry="1.2" fill="#c8e8fa"/><path d="M12.5 9.5l3.2 3.2-3.2 3.2-3.2-3.2z" fill="#f0d040" stroke="#6a6a50" stroke-width="0.8"/></svg>
<div style="left:18px;top:337px;width:1px;height:160px;background:repeating-linear-gradient(180deg,#a0a0a0 0 1px,transparent 1px 2px)"></div>
<div style="left:39px;top:354px;width:1px;height:7px;background:repeating-linear-gradient(180deg,#a0a0a0 0 1px,transparent 1px 2px)"></div>
<div style="left:60px;top:373px;width:1px;height:11px;background:repeating-linear-gradient(180deg,#a0a0a0 0 1px,transparent 1px 2px)"></div>
<div style="left:60px;top:383px;width:12px;height:1px;background:repeating-linear-gradient(90deg,#a0a0a0 0 1px,transparent 1px 2px)"></div>
<div style="left:39px;top:427px;width:1px;height:6px;background:repeating-linear-gradient(180deg,#a0a0a0 0 1px,transparent 1px 2px)"></div>
<div style="left:39px;top:442px;width:1px;height:45px;background:repeating-linear-gradient(180deg,#a0a0a0 0 1px,transparent 1px 2px)"></div>
<div style="left:60px;top:445px;width:1px;height:29px;background:repeating-linear-gradient(180deg,#a0a0a0 0 1px,transparent 1px 2px)"></div>
<div style="left:60px;top:455px;width:12px;height:1px;background:repeating-linear-gradient(90deg,#a0a0a0 0 1px,transparent 1px 2px)"></div>
<div style="left:60px;top:473px;width:12px;height:1px;background:repeating-linear-gradient(90deg,#a0a0a0 0 1px,transparent 1px 2px)"></div>
<div style="left:14px;top:343px;width:9px;height:9px;border:1px solid #a4a4a4;background:linear-gradient(#fff,#e8e8e8);border-radius:1px"></div>
<div style="left:16px;top:347px;width:5px;height:1px;background:#3a5aa8"></div>
<div style="left:35px;top:361px;width:9px;height:9px;border:1px solid #a4a4a4;background:linear-gradient(#fff,#e8e8e8);border-radius:1px"></div>
<div style="left:37px;top:365px;width:5px;height:1px;background:#3a5aa8"></div>
<div style="left:14px;top:397px;width:9px;height:9px;border:1px solid #a4a4a4;background:linear-gradient(#fff,#e8e8e8);border-radius:1px"></div>
<div style="left:16px;top:401px;width:5px;height:1px;background:#3a5aa8"></div>
<div style="left:18px;top:399px;width:1px;height:5px;background:#3a5aa8"></div>
<div style="left:14px;top:415px;width:9px;height:9px;border:1px solid #a4a4a4;background:linear-gradient(#fff,#e8e8e8);border-radius:1px"></div>
<div style="left:16px;top:419px;width:5px;height:1px;background:#3a5aa8"></div>
<div style="left:35px;top:433px;width:9px;height:9px;border:1px solid #a4a4a4;background:linear-gradient(#fff,#e8e8e8);border-radius:1px"></div>
<div style="left:37px;top:437px;width:5px;height:1px;background:#3a5aa8"></div>
<div style="left:35px;top:487px;width:9px;height:9px;border:1px solid #a4a4a4;background:linear-gradient(#fff,#e8e8e8);border-radius:1px"></div>
<div style="left:37px;top:491px;width:5px;height:1px;background:#3a5aa8"></div>
<div style="left:24px;top:347px;width:6px;height:1px;background:repeating-linear-gradient(90deg,#a0a0a0 0 1px,transparent 1px 2px)"></div>
<div style="left:45px;top:365px;width:6px;height:1px;background:repeating-linear-gradient(90deg,#a0a0a0 0 1px,transparent 1px 2px)"></div>
<div style="left:24px;top:401px;width:6px;height:1px;background:repeating-linear-gradient(90deg,#a0a0a0 0 1px,transparent 1px 2px)"></div>
<div style="left:24px;top:419px;width:6px;height:1px;background:repeating-linear-gradient(90deg,#a0a0a0 0 1px,transparent 1px 2px)"></div>
<div style="left:45px;top:437px;width:6px;height:1px;background:repeating-linear-gradient(90deg,#a0a0a0 0 1px,transparent 1px 2px)"></div>
<div style="left:45px;top:491px;width:6px;height:1px;background:repeating-linear-gradient(90deg,#a0a0a0 0 1px,transparent 1px 2px)"></div>
<div style="left:4px;top:497px;width:229px;height:1px;background:#000"></div>
<div style="left:4px;top:498px;width:1px;height:21px;background:#a0a0a0"></div>
<div style="left:7px;top:497px;width:71px;height:21px;background:#fff;border:1px solid #000;border-top:none;border-bottom-width:2px"></div>
<div class="t" style="top:500px;left:17px;transform-origin:0 0;transform:scaleX(0.9859);">Common</div>
<div class="t" style="top:500px;left:88px;transform-origin:0 0;transform:scaleX(0.9525);color:#6d6d6d">Favorites</div>
<div style="left:145px;top:501px;width:1px;height:13px;background:#808080"></div>
<div style="left:4px;top:518px;width:229px;height:1px;background:#fff"></div>
<div style="left:233px;top:317px;width:1px;height:202px;background:#fff"></div>
<div style="left:4px;top:522px;width:232px;height:1px;background:#a0a0a0"></div>
<div style="left:236px;top:107px;width:1px;height:395px;background:#a0a0a0"></div>
<div style="left:237px;top:107px;width:1px;height:395px;background:#696969"></div>
<div style="left:238px;top:107px;width:945px;height:394px;background:#000"></div>
<div style="left:1183px;top:107px;width:2px;height:395px;background:#fff"></div>
<svg style="left:0;top:0" width="1186" height="845" viewBox="0 0 1186 845"><defs><clipPath id="cp"><rect x="241" y="110" width="896" height="370"/></clipPath></defs><g clip-path="url(#cp)" shape-rendering="crispEdges"><rect x="241" y="287" width="896" height="1" fill="#778899"/><line x1="241" y1="202.5" x2="1137" y2="202.5" stroke="#32cd32" stroke-width="1" stroke-dasharray="9 6 3 6"/><rect x="241" y="423" width="1" height="35" fill="#00ff00"/><rect x="236" y="431" width="11" height="27" fill="#00ff00"/><rect x="237" y="432" width="9" height="25" fill="#000"/><rect x="257" y="422" width="1" height="19" fill="#00ff00"/><rect x="252" y="427" width="11" height="5" fill="#00ff00"/><rect x="253" y="428" width="9" height="3" fill="#000"/><rect x="273" y="422" width="1" height="28" fill="#00ff00"/><rect x="268" y="425" width="11" height="7" fill="#00ff00"/><rect x="269" y="426" width="9" height="5" fill="#fff"/><rect x="289" y="423" width="1" height="12" fill="#00ff00"/><rect x="284" y="428" width="11" height="1" fill="#00ff00"/><rect x="305" y="412" width="1" height="34" fill="#00ff00"/><rect x="300" y="428" width="11" height="1" fill="#00ff00"/><rect x="321" y="422" width="1" height="36" fill="#00ff00"/><rect x="316" y="425" width="11" height="28" fill="#00ff00"/><rect x="317" y="426" width="9" height="26" fill="#fff"/><rect x="337" y="425" width="1" height="36" fill="#00ff00"/><rect x="332" y="427" width="11" height="25" fill="#00ff00"/><rect x="333" y="428" width="9" height="23" fill="#000"/><rect x="353" y="412" width="1" height="25" fill="#00ff00"/><rect x="348" y="428" width="11" height="4" fill="#00ff00"/><rect x="349" y="429" width="9" height="2" fill="#000"/><rect x="369" y="415" width="1" height="20" fill="#00ff00"/><rect x="364" y="423" width="11" height="9" fill="#00ff00"/><rect x="365" y="424" width="9" height="7" fill="#000"/><rect x="385" y="375" width="1" height="53" fill="#00ff00"/><rect x="380" y="377" width="11" height="46" fill="#00ff00"/><rect x="381" y="378" width="9" height="44" fill="#000"/><rect x="401" y="358" width="1" height="27" fill="#00ff00"/><rect x="396" y="367" width="11" height="12" fill="#00ff00"/><rect x="397" y="368" width="9" height="10" fill="#000"/><rect x="417" y="345" width="1" height="31" fill="#00ff00"/><rect x="412" y="346" width="11" height="22" fill="#00ff00"/><rect x="413" y="347" width="9" height="20" fill="#000"/><rect x="433" y="311" width="1" height="40" fill="#00ff00"/><rect x="428" y="324" width="11" height="19" fill="#00ff00"/><rect x="429" y="325" width="9" height="17" fill="#000"/><rect x="449" y="282" width="1" height="44" fill="#00ff00"/><rect x="444" y="300" width="11" height="26" fill="#00ff00"/><rect x="445" y="301" width="9" height="24" fill="#000"/><rect x="465" y="215" width="1" height="91" fill="#00ff00"/><rect x="460" y="239" width="11" height="63" fill="#00ff00"/><rect x="461" y="240" width="9" height="61" fill="#000"/><rect x="481" y="237" width="1" height="47" fill="#00ff00"/><rect x="476" y="239" width="11" height="27" fill="#00ff00"/><rect x="477" y="240" width="9" height="25" fill="#fff"/><rect x="497" y="247" width="1" height="28" fill="#00ff00"/><rect x="492" y="253" width="11" height="14" fill="#00ff00"/><rect x="493" y="254" width="9" height="12" fill="#000"/><rect x="513" y="247" width="1" height="22" fill="#00ff00"/><rect x="508" y="250" width="11" height="14" fill="#00ff00"/><rect x="509" y="251" width="9" height="12" fill="#fff"/><rect x="529" y="245" width="1" height="26" fill="#00ff00"/><rect x="524" y="261" width="11" height="3" fill="#00ff00"/><rect x="525" y="262" width="9" height="1" fill="#000"/><rect x="545" y="261" width="1" height="26" fill="#00ff00"/><rect x="540" y="261" width="11" height="6" fill="#00ff00"/><rect x="541" y="262" width="9" height="4" fill="#fff"/><rect x="561" y="268" width="1" height="29" fill="#00ff00"/><rect x="556" y="268" width="11" height="15" fill="#00ff00"/><rect x="557" y="269" width="9" height="13" fill="#fff"/><rect x="577" y="258" width="1" height="28" fill="#00ff00"/><rect x="572" y="277" width="11" height="5" fill="#00ff00"/><rect x="573" y="278" width="9" height="3" fill="#000"/><rect x="593" y="244" width="1" height="40" fill="#00ff00"/><rect x="588" y="248" width="11" height="29" fill="#00ff00"/><rect x="589" y="249" width="9" height="27" fill="#000"/><rect x="609" y="236" width="1" height="13" fill="#00ff00"/><rect x="604" y="239" width="11" height="9" fill="#00ff00"/><rect x="605" y="240" width="9" height="7" fill="#000"/><rect x="625" y="229" width="1" height="42" fill="#00ff00"/><rect x="620" y="237" width="11" height="29" fill="#00ff00"/><rect x="621" y="238" width="9" height="27" fill="#fff"/><rect x="641" y="265" width="1" height="34" fill="#00ff00"/><rect x="636" y="266" width="11" height="16" fill="#00ff00"/><rect x="637" y="267" width="9" height="14" fill="#fff"/><rect x="657" y="282" width="1" height="28" fill="#00ff00"/><rect x="652" y="282" width="11" height="28" fill="#00ff00"/><rect x="653" y="283" width="9" height="26" fill="#fff"/><rect x="673" y="309" width="1" height="24" fill="#00ff00"/><rect x="668" y="314" width="11" height="1" fill="#00ff00"/><rect x="689" y="281" width="1" height="37" fill="#00ff00"/><rect x="684" y="314" width="11" height="1" fill="#00ff00"/><rect x="705" y="293" width="1" height="24" fill="#00ff00"/><rect x="700" y="301" width="11" height="11" fill="#00ff00"/><rect x="701" y="302" width="9" height="9" fill="#000"/><rect x="721" y="298" width="1" height="38" fill="#00ff00"/><rect x="716" y="298" width="11" height="12" fill="#00ff00"/><rect x="717" y="299" width="9" height="10" fill="#fff"/><rect x="737" y="284" width="1" height="31" fill="#00ff00"/><rect x="732" y="284" width="11" height="28" fill="#00ff00"/><rect x="733" y="285" width="9" height="26" fill="#000"/><rect x="753" y="282" width="1" height="18" fill="#00ff00"/><rect x="748" y="284" width="11" height="14" fill="#00ff00"/><rect x="749" y="285" width="9" height="12" fill="#fff"/><rect x="769" y="248" width="1" height="64" fill="#00ff00"/><rect x="764" y="268" width="11" height="39" fill="#00ff00"/><rect x="765" y="269" width="9" height="37" fill="#000"/><rect x="785" y="266" width="1" height="17" fill="#00ff00"/><rect x="780" y="268" width="11" height="15" fill="#00ff00"/><rect x="781" y="269" width="9" height="13" fill="#fff"/><rect x="801" y="276" width="1" height="36" fill="#00ff00"/><rect x="796" y="282" width="11" height="3" fill="#00ff00"/><rect x="797" y="283" width="9" height="1" fill="#fff"/><rect x="817" y="250" width="1" height="44" fill="#00ff00"/><rect x="812" y="252" width="11" height="39" fill="#00ff00"/><rect x="813" y="253" width="9" height="37" fill="#000"/><rect x="833" y="251" width="1" height="31" fill="#00ff00"/><rect x="828" y="253" width="11" height="25" fill="#00ff00"/><rect x="829" y="254" width="9" height="23" fill="#fff"/><rect x="849" y="263" width="1" height="23" fill="#00ff00"/><rect x="844" y="263" width="11" height="17" fill="#00ff00"/><rect x="845" y="264" width="9" height="15" fill="#000"/><rect x="865" y="191" width="1" height="70" fill="#00ff00"/><rect x="860" y="208" width="11" height="53" fill="#00ff00"/><rect x="861" y="209" width="9" height="51" fill="#000"/><rect x="881" y="208" width="1" height="17" fill="#00ff00"/><rect x="876" y="208" width="11" height="11" fill="#00ff00"/><rect x="877" y="209" width="9" height="9" fill="#fff"/><rect x="897" y="204" width="1" height="35" fill="#00ff00"/><rect x="892" y="218" width="11" height="15" fill="#00ff00"/><rect x="893" y="219" width="9" height="13" fill="#fff"/><rect x="913" y="210" width="1" height="39" fill="#00ff00"/><rect x="908" y="220" width="11" height="17" fill="#00ff00"/><rect x="909" y="221" width="9" height="15" fill="#000"/><rect x="929" y="218" width="1" height="42" fill="#00ff00"/><rect x="924" y="221" width="11" height="28" fill="#00ff00"/><rect x="925" y="222" width="9" height="26" fill="#fff"/><rect x="945" y="210" width="1" height="45" fill="#00ff00"/><rect x="940" y="221" width="11" height="30" fill="#00ff00"/><rect x="941" y="222" width="9" height="28" fill="#000"/><rect x="961" y="199" width="1" height="35" fill="#00ff00"/><rect x="956" y="199" width="11" height="22" fill="#00ff00"/><rect x="957" y="200" width="9" height="20" fill="#000"/><rect x="977" y="171" width="1" height="34" fill="#00ff00"/><rect x="972" y="194" width="11" height="7" fill="#00ff00"/><rect x="973" y="195" width="9" height="5" fill="#000"/><rect x="993" y="136" width="1" height="62" fill="#00ff00"/><rect x="988" y="143" width="11" height="55" fill="#00ff00"/><rect x="989" y="144" width="9" height="53" fill="#000"/><rect x="1009" y="131" width="1" height="49" fill="#00ff00"/><rect x="1004" y="144" width="11" height="33" fill="#00ff00"/><rect x="1005" y="145" width="9" height="31" fill="#fff"/><rect x="1025" y="163" width="1" height="27" fill="#00ff00"/><rect x="1020" y="176" width="11" height="6" fill="#00ff00"/><rect x="1021" y="177" width="9" height="4" fill="#fff"/><rect x="1041" y="176" width="1" height="45" fill="#00ff00"/><rect x="1036" y="183" width="11" height="12" fill="#00ff00"/><rect x="1037" y="184" width="9" height="10" fill="#fff"/><rect x="1057" y="192" width="1" height="21" fill="#00ff00"/><rect x="1052" y="192" width="11" height="17" fill="#00ff00"/><rect x="1053" y="193" width="9" height="15" fill="#fff"/><rect x="1073" y="205" width="1" height="72" fill="#00ff00"/><rect x="1068" y="210" width="11" height="65" fill="#00ff00"/><rect x="1069" y="211" width="9" height="63" fill="#fff"/><rect x="1089" y="261" width="1" height="41" fill="#00ff00"/><rect x="1084" y="273" width="11" height="15" fill="#00ff00"/><rect x="1085" y="274" width="9" height="13" fill="#fff"/></g></svg>
<div style="left:240px;top:109px;width:898px;height:1px;background:#fff"></div>
<div style="left:240px;top:109px;width:1px;height:372px;background:#fff"></div>
<div style="left:1137px;top:109px;width:1px;height:372px;background:#fff"></div>
<div style="left:240px;top:480px;width:898px;height:1px;background:#fff"></div>
<div style="left:1138px;top:151px;width:2px;height:1px;background:#fff"></div>
<div class="t c" style="left:1143px;top:145px;font-size:10px;transform-origin:0 0;transform:scaleX(0.8989)">1.27125</div>
<div style="left:1138px;top:191px;width:2px;height:1px;background:#fff"></div>
<div class="t c" style="left:1143px;top:185px;font-size:10px;transform-origin:0 0;transform:scaleX(0.8989)">1.27100</div>
<div style="left:1138px;top:231px;width:2px;height:1px;background:#fff"></div>
<div class="t c" style="left:1143px;top:225px;font-size:10px;transform-origin:0 0;transform:scaleX(0.8989)">1.27075</div>
<div style="left:1138px;top:271px;width:2px;height:1px;background:#fff"></div>
<div class="t c" style="left:1143px;top:265px;font-size:10px;transform-origin:0 0;transform:scaleX(0.8989)">1.27050</div>
<div style="left:1138px;top:311px;width:2px;height:1px;background:#fff"></div>
<div class="t c" style="left:1143px;top:305px;font-size:10px;transform-origin:0 0;transform:scaleX(0.8989)">1.27025</div>
<div style="left:1138px;top:351px;width:2px;height:1px;background:#fff"></div>
<div class="t c" style="left:1143px;top:345px;font-size:10px;transform-origin:0 0;transform:scaleX(0.8989)">1.27000</div>
<div style="left:1138px;top:391px;width:2px;height:1px;background:#fff"></div>
<div class="t c" style="left:1143px;top:385px;font-size:10px;transform-origin:0 0;transform:scaleX(0.8989)">1.26975</div>
<div style="left:1138px;top:431px;width:2px;height:1px;background:#fff"></div>
<div class="t c" style="left:1143px;top:425px;font-size:10px;transform-origin:0 0;transform:scaleX(0.8989)">1.26950</div>
<div style="left:1138px;top:471px;width:2px;height:1px;background:#fff"></div>
<div class="t c" style="left:1143px;top:465px;font-size:10px;transform-origin:0 0;transform:scaleX(0.8989)">1.26925</div>
<div style="left:1139px;top:282px;width:41px;height:12px;background:#fff"></div>
<div class="t" style="left:1143px;top:281px;font-size:10px;transform-origin:0 0;transform:scaleX(0.898);color:#000;-webkit-text-stroke:0.25px #000">1.27040</div>
<div style="left:241px;top:481px;width:1px;height:3px;background:#fff"></div>
<div class="t c" style="left:241px;top:483px;font-size:10px;transform-origin:0 0;transform:scaleX(0.9255)">14 Aug 2023</div>
<div style="left:305px;top:481px;width:1px;height:3px;background:#fff"></div>
<div class="t c" style="left:305px;top:483px;font-size:10px;transform-origin:0 0;transform:scaleX(0.9327)">14 Aug 13:02</div>
<div style="left:369px;top:481px;width:1px;height:3px;background:#fff"></div>
<div class="t c" style="left:369px;top:483px;font-size:10px;transform-origin:0 0;transform:scaleX(0.9327)">14 Aug 13:06</div>
<div style="left:433px;top:481px;width:1px;height:3px;background:#fff"></div>
<div class="t c" style="left:433px;top:483px;font-size:10px;transform-origin:0 0;transform:scaleX(0.9327)">14 Aug 13:10</div>
<div style="left:497px;top:481px;width:1px;height:3px;background:#fff"></div>
<div class="t c" style="left:497px;top:483px;font-size:10px;transform-origin:0 0;transform:scaleX(0.9327)">14 Aug 13:14</div>
<div style="left:561px;top:481px;width:1px;height:3px;background:#fff"></div>
<div class="t c" style="left:561px;top:483px;font-size:10px;transform-origin:0 0;transform:scaleX(0.9327)">14 Aug 13:18</div>
<div style="left:625px;top:481px;width:1px;height:3px;background:#fff"></div>
<div class="t c" style="left:625px;top:483px;font-size:10px;transform-origin:0 0;transform:scaleX(0.9327)">14 Aug 13:22</div>
<div style="left:689px;top:481px;width:1px;height:3px;background:#fff"></div>
<div class="t c" style="left:689px;top:483px;font-size:10px;transform-origin:0 0;transform:scaleX(0.9327)">14 Aug 13:26</div>
<div style="left:753px;top:481px;width:1px;height:3px;background:#fff"></div>
<div class="t c" style="left:753px;top:483px;font-size:10px;transform-origin:0 0;transform:scaleX(0.9327)">14 Aug 13:30</div>
<div style="left:817px;top:481px;width:1px;height:3px;background:#fff"></div>
<div class="t c" style="left:817px;top:483px;font-size:10px;transform-origin:0 0;transform:scaleX(0.9327)">14 Aug 13:34</div>
<div style="left:881px;top:481px;width:1px;height:3px;background:#fff"></div>
<div class="t c" style="left:881px;top:483px;font-size:10px;transform-origin:0 0;transform:scaleX(0.9327)">14 Aug 13:38</div>
<div style="left:945px;top:481px;width:1px;height:3px;background:#fff"></div>
<div class="t c" style="left:945px;top:483px;font-size:10px;transform-origin:0 0;transform:scaleX(0.9327)">14 Aug 13:42</div>
<div style="left:1009px;top:481px;width:1px;height:3px;background:#fff"></div>
<div class="t c" style="left:1009px;top:483px;font-size:10px;transform-origin:0 0;transform:scaleX(0.9327)">14 Aug 13:46</div>
<div style="left:1073px;top:481px;width:1px;height:3px;background:#fff"></div>
<div class="t c" style="left:1073px;top:483px;font-size:10px;transform-origin:0 0;transform:scaleX(0.9327)">14 Aug 13:50</div>
<svg style="left:244px;top:116px;" width="8" height="5" viewBox="0 0 8 5"><path d="M0 0H7.5L3.75 4.5Z" fill="#fff"/></svg>
<div class="t c" style="left:256px;top:111px;font-size:10px;transform-origin:0 0;transform:scaleX(0.9290)">GBPUSD,M1&nbsp; 1.27049 1.27056 1.27031 1.27040</div>
<div class="t c" style="left:248px;top:190px;font-size:10px;transform-origin:0 0;transform:scaleX(0.9200)">#673409546 sell 1.00</div>
<div style="left:238px;top:501px;width:947px;height:2px;background:#fff"></div>
<div style="left:237px;top:503px;width:948px;height:1px;background:#000"></div>
<div style="left:237px;top:504px;width:1px;height:18px;background:#808080"></div>
<div class="t" style="top:505px;left:253px;transform-origin:0 0;transform:scaleX(0.8957);color:#6d6d6d">EURUSD,M15</div>
<div style="left:334px;top:502px;width:88px;height:20px;background:#fff;border:1px solid #000;border-top:none;border-bottom-width:2px"></div>
<div class="t" style="top:505px;left:347px;transform-origin:0 0;transform:scaleX(0.8773);">GBPUSD,M1</div>
<svg style="left:1153px;top:508px;" width="4" height="7" viewBox="0 0 4 7"><path d="M4 0V7L0 3.5Z" fill="#a0a0a0"/></svg>
<svg style="left:1172px;top:508px;" width="4" height="7" viewBox="0 0 4 7"><path d="M0 0V7L4 3.5Z" fill="#a0a0a0"/></svg>
<div style="left:1px;top:523px;width:1184px;height:1px;background:#fff"></div>
<svg style="left:5px;top:532px;" width="6" height="5" viewBox="0 0 6 5"><path d="M0.6 0.5L5.4 4.5M5.4 0.5L0.6 4.5" stroke="#000" stroke-width="1.7"/></svg>
<div style="left:2px;top:541px;width:13px;height:277px;background:#a9bfd9"></div>
<div class="t" style="left:3px;top:815px;transform-origin:0 0;transform:rotate(-90deg) scaleX(0.93)">Terminal</div>
<div style="left:16px;top:527px;width:1167px;height:269px;background:#fff;border-left:1px solid #a0a0a0;border-top:1px solid #a0a0a0"></div>
<div style="left:131px;top:528px;width:1px;height:23px;background:#e8e8e8"></div>
<div style="left:290px;top:528px;width:1px;height:23px;background:#e8e8e8"></div>
<div style="left:369px;top:528px;width:1px;height:23px;background:#e8e8e8"></div>
<div style="left:431px;top:528px;width:1px;height:23px;background:#e8e8e8"></div>
<div style="left:510px;top:528px;width:1px;height:23px;background:#e8e8e8"></div>
<div style="left:598px;top:528px;width:1px;height:23px;background:#e8e8e8"></div>
<div style="left:686px;top:528px;width:1px;height:23px;background:#e8e8e8"></div>
<div style="left:774px;top:528px;width:1px;height:23px;background:#e8e8e8"></div>
<div style="left:862px;top:528px;width:1px;height:23px;background:#e8e8e8"></div>
<div style="left:950px;top:528px;width:1px;height:23px;background:#e8e8e8"></div>
<div style="left:1038px;top:528px;width:1px;height:23px;background:#e8e8e8"></div>
<div style="left:17px;top:551px;width:1164px;height:1px;background:#e8e8e8"></div>
<div class="t" style="top:533px;left:23px;transform-origin:0 0;transform:scaleX(1.0107);">Order</div>
<svg style="left:64px;top:538px;" width="4" height="7" viewBox="0 0 4 7"><path d="M0.5 6.5L3.5 0.5" stroke="#909090" stroke-width="0.9"/></svg>
<div class="t" style="top:533px;right:900px;transform-origin:100% 0;transform:scaleX(0.9887);">Time</div>
<div class="t" style="top:533px;right:821px;transform-origin:100% 0;">Type</div>
<div class="t" style="top:533px;right:759px;transform-origin:100% 0;transform:scaleX(0.9657);">Size</div>
<div class="t" style="top:533px;right:680px;transform-origin:100% 0;transform:scaleX(0.9800);">Symbol</div>
<div class="t" style="top:533px;right:592px;transform-origin:100% 0;transform:scaleX(0.9707);">Price</div>
<div class="t" style="top:533px;right:504px;transform-origin:100% 0;transform:scaleX(0.9405);">S / L</div>
<div class="t" style="top:533px;right:416px;transform-origin:100% 0;transform:scaleX(0.9476);">T / P</div>
<div class="t" style="top:533px;right:328px;transform-origin:100% 0;transform:scaleX(0.9707);">Price</div>
<div class="t" style="top:533px;right:240px;transform-origin:100% 0;transform:scaleX(0.9869);">Commission</div>
<div class="t" style="top:533px;right:152px;transform-origin:100% 0;transform:scaleX(0.9733);">Swap</div>
<div class="t" style="top:533px;right:11px;transform-origin:100% 0;transform:scaleX(0.9714);">Profit</div>
<div style="left:17px;top:552px;width:1164px;height:20px;background:#0078d7"></div>
<div style="left:130px;top:552px;width:1px;height:20px;background:#d0e4f6"></div>
<div style="left:289px;top:552px;width:1px;height:20px;background:#d0e4f6"></div>
<div style="left:368px;top:552px;width:1px;height:20px;background:#d0e4f6"></div>
<div style="left:430px;top:552px;width:1px;height:20px;background:#d0e4f6"></div>
<div style="left:509px;top:552px;width:1px;height:20px;background:#d0e4f6"></div>
<div style="left:597px;top:552px;width:1px;height:20px;background:#d0e4f6"></div>
<div style="left:685px;top:552px;width:1px;height:20px;background:#d0e4f6"></div>
<div style="left:773px;top:552px;width:1px;height:20px;background:#d0e4f6"></div>
<div style="left:861px;top:552px;width:1px;height:20px;background:#d0e4f6"></div>
<div style="left:949px;top:552px;width:1px;height:20px;background:#d0e4f6"></div>
<div style="left:1037px;top:552px;width:1px;height:20px;background:#d0e4f6"></div>
<svg style="left:20px;top:555px;" width="14" height="15" viewBox="0 0 14 15"><path d="M0.5 0.5h7l3 3v10h-10z" fill="#fff" stroke="#777"/><path d="M7.5 0.5v3h3" fill="#ddd" stroke="#777"/><circle cx="10" cy="11" r="3.6" fill="#f04818" stroke="#b02800" stroke-width="0.8"/></svg>
<div class="t" style="top:555px;left:39px;transform-origin:0 0;transform:scaleX(0.8800);color:#fff">673409546</div>
<div class="t" style="top:555px;right:899px;transform-origin:100% 0;transform:scaleX(0.8836);color:#fff">2023.08.14 13:49:31</div>
<div class="t" style="top:555px;right:820px;transform-origin:100% 0;color:#fff">sell</div>
<div class="t" style="top:555px;right:758px;transform-origin:100% 0;transform:scaleX(0.8800);color:#fff">1.00</div>
<div class="t" style="top:555px;right:679px;transform-origin:100% 0;color:#fff">gbpusd</div>
<div class="t" style="top:555px;right:591px;transform-origin:100% 0;transform:scaleX(0.8800);color:#fff">1.27093</div>
<div class="t" style="top:555px;right:503px;transform-origin:100% 0;transform:scaleX(0.8800);color:#fff">0.00000</div>
<div class="t" style="top:555px;right:415px;transform-origin:100% 0;transform:scaleX(0.8800);color:#fff">0.00000</div>
<div class="t" style="top:555px;right:151px;transform-origin:100% 0;transform:scaleX(0.8800);color:#fff">0.00</div>
<div class="t" style="top:555px;right:29px;transform-origin:100% 0;transform:scaleX(0.8800);color:#fff">25.00</div>
<svg style="left:1167px;top:558px;" width="8" height="8" viewBox="0 0 8 8"><path d="M1 1L7 7M7 1L1 7" stroke="#a8c8ec" stroke-width="2"/></svg>
<div style="left:17px;top:572px;width:1164px;height:20px;background:#c8c8c8"></div>
<svg style="left:20px;top:575px;" width="12" height="15" viewBox="0 0 12 15"><rect x="0.5" y="0.5" width="11" height="14" rx="1" fill="#fff" stroke="#777"/><path d="M6 3.5l3.5 3.5H7.5v3.5h-3V7H2.5z" fill="#20a020" stroke="#107010" stroke-width="0.6"/></svg>
<div class="t" style="top:575px;left:39px;transform-origin:0 0;transform:scaleX(0.9799);font-weight:bold;">Balance: 4 963.00 USD&nbsp; Equity: 4 988.00&nbsp; Margin: 127.09&nbsp; Free margin: 4 860.91&nbsp; Margin level: 3924.69%</div>
<div class="t" style="top:575px;right:29px;transform-origin:100% 0;transform:scaleX(0.8800);font-weight:bold;">25.00</div>
<div style="left:17px;top:795px;width:1166px;height:1px;background:#000"></div>
<div style="left:19px;top:795px;width:49px;height:20px;background:#fff;border:1px solid #000;border-top:none;border-bottom-width:2px"></div>
<div class="t" style="top:798px;left:29px;transform-origin:0 0;transform:scaleX(0.9383);">Trade</div>
<div class="t" style="top:798px;left:78px;transform-origin:0 0;transform:scaleX(0.9470);color:#6d6d6d">Exposure</div>
<div class="t" style="top:798px;left:146px;transform-origin:0 0;transform:scaleX(1.0236);color:#6d6d6d">Account History</div>
<div class="t" style="top:798px;left:252px;transform-origin:0 0;transform:scaleX(0.9662);color:#6d6d6d">News</div>
<div class="t" style="top:798px;left:313px;transform-origin:0 0;transform:scaleX(1.0107);color:#6d6d6d">Alerts</div>
<div class="t" style="top:798px;left:363px;transform-origin:0 0;transform:scaleX(1.0397);color:#6d6d6d">Mailbox</div>
<div class="t" style="top:798px;left:433px;transform-origin:0 0;transform:scaleX(1.0362);color:#6d6d6d">Market</div>
<div class="t" style="top:798px;left:507px;transform-origin:0 0;transform:scaleX(0.9909);color:#6d6d6d">Signals</div>
<div class="t" style="top:798px;left:564px;transform-origin:0 0;transform:scaleX(1.0929);color:#6d6d6d">Articles</div>
<div class="t" style="top:798px;left:623px;transform-origin:0 0;transform:scaleX(0.8929);color:#6d6d6d">Code Base</div>
<div class="t" style="top:798px;left:698px;transform-origin:0 0;transform:scaleX(0.9589);color:#6d6d6d">Experts</div>
<div class="t" style="top:798px;left:756px;transform-origin:0 0;transform:scaleX(1.0163);color:#6d6d6d">Journal</div>
<div style="left:137px;top:799px;width:1px;height:14px;background:#808080"></div>
<div style="left:242px;top:799px;width:1px;height:14px;background:#808080"></div>
<div style="left:303px;top:799px;width:1px;height:14px;background:#808080"></div>
<div style="left:353px;top:799px;width:1px;height:14px;background:#808080"></div>
<div style="left:424px;top:799px;width:1px;height:14px;background:#808080"></div>
<div style="left:497px;top:799px;width:1px;height:14px;background:#808080"></div>
<div style="left:555px;top:799px;width:1px;height:14px;background:#808080"></div>
<div style="left:614px;top:799px;width:1px;height:14px;background:#808080"></div>
<div style="left:689px;top:799px;width:1px;height:14px;background:#808080"></div>
<div style="left:746px;top:799px;width:1px;height:14px;background:#808080"></div>
<div class="t" style="top:804px;left:282px;transform-origin:0 0;transform:scaleX(0.8800);font-size:10px;font-weight:bold;color:#ff1a1a">21</div>
<div class="t" style="top:804px;left:407px;transform-origin:0 0;transform:scaleX(0.8800);font-size:10px;font-weight:bold;color:#ff1a1a">2</div>
<div class="t" style="top:804px;left:472px;transform-origin:0 0;transform:scaleX(0.9098);font-size:10px;font-weight:bold;color:#ff1a1a">119</div>
<div style="left:1px;top:817px;width:1184px;height:1px;background:#fff"></div>
<div style="left:1px;top:820px;width:1184px;height:1px;background:#a0a0a0"></div>
<div style="left:1182px;top:527px;width:1px;height:269px;background:#fff"></div>
<div class="t" style="top:827px;left:4px;transform-origin:0 0;transform:scaleX(0.9914);">Modify or delete order</div>
<div style="left:472px;top:825px;width:1px;height:18px;background:#a0a0a0"></div>
<div style="left:589px;top:825px;width:1px;height:18px;background:#a0a0a0"></div>
<div style="left:690px;top:825px;width:1px;height:18px;background:#a0a0a0"></div>
<div style="left:761px;top:825px;width:1px;height:18px;background:#a0a0a0"></div>
<div style="left:832px;top:825px;width:1px;height:18px;background:#a0a0a0"></div>
<div style="left:900px;top:825px;width:1px;height:18px;background:#a0a0a0"></div>
<div style="left:970px;top:825px;width:1px;height:18px;background:#a0a0a0"></div>
<div style="left:1036px;top:825px;width:1px;height:18px;background:#a0a0a0"></div>
<div class="t" style="top:827px;left:478px;transform-origin:0 0;">Default</div>
<svg style="left:1042px;top:827px;shape-rendering:crispEdges" width="24" height="13" viewBox="0 0 24 13"><rect x="0" y="0" width="2" height="9" fill="#4a6a00"/><rect x="0" y="10" width="2" height="3" fill="#002a4a"/><rect x="3" y="0" width="2" height="8" fill="#4a6a00"/><rect x="3" y="9" width="2" height="4" fill="#002a4a"/><rect x="6" y="0" width="2" height="7" fill="#4a6a00"/><rect x="6" y="8" width="2" height="5" fill="#002a4a"/><rect x="9" y="0" width="2" height="6" fill="#4a6a00"/><rect x="9" y="7" width="2" height="6" fill="#002a4a"/><rect x="12" y="0" width="2" height="5" fill="#4a6a00"/><rect x="12" y="6" width="2" height="7" fill="#002a4a"/><rect x="15" y="0" width="2" height="4" fill="#4a6a00"/><rect x="15" y="5" width="2" height="8" fill="#002a4a"/><rect x="18" y="0" width="2" height="3" fill="#4a6a00"/><rect x="18" y="4" width="2" height="9" fill="#002a4a"/><rect x="21" y="0" width="2" height="2" fill="#4a6a00"/><rect x="21" y="3" width="2" height="10" fill="#002a4a"/></svg>
<div class="t" style="top:827px;left:1069px;transform-origin:0 0;transform:scaleX(0.9562);">950/2 kb</div>
<svg style="left:1170px;top:830px;" width="13" height="13" viewBox="0 0 13 13"><path d="M12 2L2 12M12 6L6 12M12 10L10 12" stroke="#a0a0a0" stroke-width="1"/></svg>
<div style="left:761px;top:559px;width:197px;height:253px;background:rgba(0,0,0,0.3);filter:blur(1.3px)"></div>
<div style="left:759px;top:557px;width:197px;height:253px;background:#fff;border:1px solid #707070"></div>
<div style="left:761px;top:559px;width:25px;height:249px;background:#f0f0f0"></div>
<div style="left:762px;top:606px;width:191px;height:23px;background:#c4d6e8;border:1px solid #2e86de"></div>
<div style="left:794px;top:633px;width:158px;height:1px;background:#dadada"></div>
<div style="left:794px;top:688px;width:158px;height:1px;background:#dadada"></div>
<div class="t" style="top:565px;left:794px;transform-origin:0 0;transform:scaleX(0.9690);">New Order</div>
<div class="t" style="top:565px;left:929px;transform-origin:0 0;transform:scaleX(0.8905);">F9</div>
<svg style="left:765px;top:564px;" width="17" height="18" viewBox="0 0 17 18"><path d="M1.5 0.5h8l3 3v10h-11z" fill="#fff" stroke="#666"/><path d="M9.5 0.5v3h3" fill="#e0e0e0" stroke="#666"/><path d="M3 3h3M3 5.5h6M3 8h6M3 10.5h4" stroke="#8a8a8a"/><path d="M10 8h3v3h3v3h-3v3h-3v-3h-3v-3h3z" fill="#30c030" stroke="#0a800a" stroke-width="0.9"/></svg>
<div class="t" style="top:588px;left:794px;transform-origin:0 0;transform:scaleX(0.9722);">Close Order</div>
<svg style="left:765px;top:587px;" width="17" height="18" viewBox="0 0 17 18"><path d="M1.5 0.5h8l3 3v10h-11z" fill="#fff" stroke="#666"/><path d="M9.5 0.5v3h3" fill="#e0e0e0" stroke="#666"/><path d="M3 3h3M3 5.5h6M3 8h6M3 10.5h4" stroke="#8a8a8a"/><circle cx="12" cy="13" r="4.3" fill="#22b040" stroke="#0a700a" stroke-width="0.8"/><path d="M9.8 12.8l1.8 1.8 2.6-2.8" stroke="#fff" stroke-width="1.2" fill="none"/></svg>
<div class="t" style="top:611px;left:794px;transform-origin:0 0;transform:scaleX(0.9769);">Modify or Delete Order</div>
<svg style="left:765px;top:610px;" width="17" height="18" viewBox="0 0 17 18"><path d="M1.5 0.5h8l3 3v10h-11z" fill="#fff" stroke="#666"/><path d="M9.5 0.5v3h3" fill="#e0e0e0" stroke="#666"/><path d="M3 3h3M3 5.5h6M3 8h6M3 10.5h4" stroke="#8a8a8a"/><circle cx="11.5" cy="13" r="3.6" fill="#f4c838" stroke="#b08010" stroke-width="1.6" stroke-dasharray="1.3 0.8"/><circle cx="11.5" cy="13" r="1.3" fill="#fff6c0"/></svg>
<div class="t" style="top:643px;left:794px;transform-origin:0 0;transform:scaleX(0.9836);">Trailing Stop</div>
<svg style="left:941px;top:646px;" width="4" height="7" viewBox="0 0 4 7"><path d="M0 0V7L4 3.5Z" fill="#000"/></svg>
<div class="t" style="top:666px;left:794px;transform-origin:0 0;transform:scaleX(0.9714);">Profit</div>
<svg style="left:941px;top:669px;" width="4" height="7" viewBox="0 0 4 7"><path d="M0 0V7L4 3.5Z" fill="#000"/></svg>
<div class="t" style="top:698px;left:794px;transform-origin:0 0;transform:scaleX(0.9880);">Commissions</div>
<svg style="left:770px;top:700px;" width="9" height="8" viewBox="0 0 9 8"><path d="M1 4l2.5 3L8 1" stroke="#000" stroke-width="1.8" fill="none"/></svg>
<div class="t" style="top:721px;left:794px;transform-origin:0 0;transform:scaleX(1.0190);">Taxes</div>
<div class="t" style="top:744px;left:794px;transform-origin:0 0;transform:scaleX(0.9851);">Comments</div>
<div class="t" style="top:767px;left:794px;transform-origin:0 0;transform:scaleX(0.9865);">Auto Arrange</div>
<div class="t" style="top:767px;left:932px;transform-origin:0 0;transform:scaleX(0.9000);">A</div>
<svg style="left:770px;top:769px;" width="9" height="8" viewBox="0 0 9 8"><path d="M1 4l2.5 3L8 1" stroke="#000" stroke-width="1.8" fill="none"/></svg>
<div class="t" style="top:790px;left:794px;transform-origin:0 0;transform:scaleX(0.9589);">Grid</div>
<div class="t" style="top:790px;left:932px;transform-origin:0 0;transform:scaleX(0.9000);">G</div>
<svg style="left:770px;top:792px;" width="9" height="8" viewBox="0 0 9 8"><path d="M1 4l2.5 3L8 1" stroke="#000" stroke-width="1.8" fill="none"/></svg></body></html>
